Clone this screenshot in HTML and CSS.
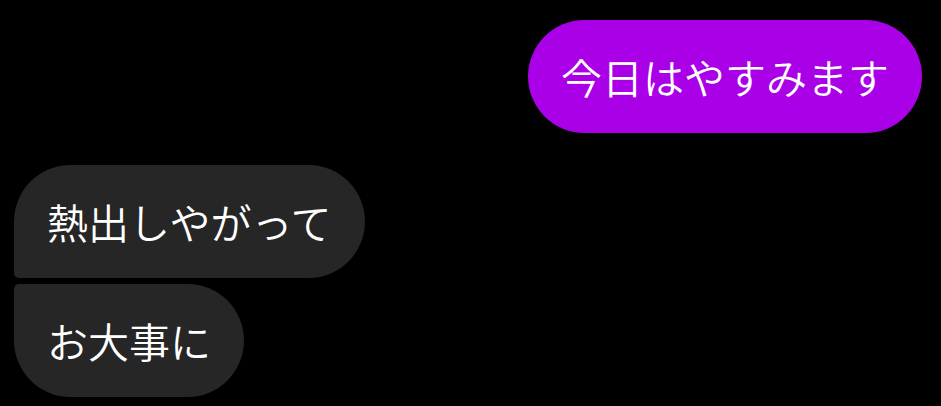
FILE: index.html
```html
<!DOCTYPE html>
<html lang="ja">
<head>
<meta charset="utf-8">
<link rel="stylesheet" href="styles.css">
</head>
<body>
<div class="chat">
  <div class="row row-out">
    <div class="bubble out">今日はやすみます</div>
  </div>
  <div class="group-in">
    <div class="bubble in first">熱出しやがって</div>
    <div class="bubble in last">お大事に</div>
  </div>
</div>
</body>
</html>
```
FILE: styles.css
```css
html, body {
  margin: 0;
  background: #000;
}
.chat {
  display: flex;
  flex-direction: column;
  padding: 20px 19px 0 14px;
  font-family: "Noto Sans CJK JP", "Noto Sans", sans-serif;
  font-weight: 350;
  color: #fff;
}
.row-out {
  display: flex;
  justify-content: flex-end;
}
.group-in {
  display: flex;
  flex-direction: column;
  align-items: flex-start;
  gap: 6px;
  margin-top: 32px;
}
.bubble {
  font-size: 41px;
  line-height: 49px;
  padding: 32px 33px;
  border-radius: 57px;
  white-space: nowrap;
}
.out {
  background: #aa00e8;
}
.in {
  background: #262626;
}
.first {
  border-bottom-left-radius: 5px;
}
.last {
  border-top-left-radius: 5px;
}
```
